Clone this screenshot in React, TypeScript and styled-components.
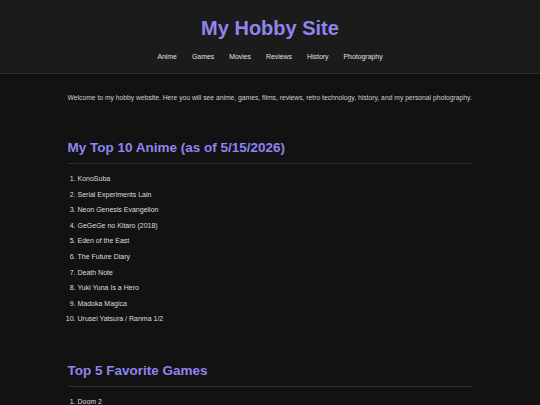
import React from "react";
import styled, { createGlobalStyle } from "styled-components";

const Global = createGlobalStyle`
  html, body { margin: 0; padding: 0; background: #121212; }
  body { font-family: "Liberation Sans", Arial, sans-serif; color: #dcdcdc; }
`;

const Header = styled.header`
  background: #1b1b1b;
  border-bottom: 1px solid #2c2c2c;
  padding: 17px 0 12px;
  text-align: center;
`;

const Title = styled.h1`
  margin: 0;
  font-size: 20px;
  line-height: 23px;
  font-weight: 700;
  color: #8f85ee;
`;

const Nav = styled.nav`
  display: flex;
  justify-content: center;
  gap: 15px;
  margin-top: 13px;
`;

const NavLink = styled.a`
  font-size: 6.9px;
  line-height: 8px;
  color: #e0e0e0;
  text-decoration: none;
`;

const Main = styled.main`
  width: 75%;
  margin: 0 auto;
  padding: 19px 0 20px;
`;

const Intro = styled.p`
  margin: 0;
  font-size: 6.75px;
  line-height: 9px;
  color: #cfcfcf;
  white-space: nowrap;
`;

const Section = styled.section<{ $gap: number }>`
  margin-top: ${(p) => p.$gap}px;
`;

const Heading = styled.h2`
  margin: 0;
  font-size: 13.5px;
  line-height: 16px;
  font-weight: 700;
  color: #8f85ee;
  padding-bottom: 7px;
  border-bottom: 1px solid #2f2f2f;
`;

const List = styled.ol`
  margin: 7px 0 0;
  padding-left: 10px;
`;

const Item = styled.li`
  font-size: 7px;
  line-height: 15.6px;
  color: #dedede;
`;

const anime = [
  "KonoSuba",
  "Serial Experiments Lain",
  "Neon Genesis Evangelion",
  "GeGeGe no Kitaro (2018)",
  "Eden of the East",
  "The Future Diary",
  "Death Note",
  "Yuki Yuna Is a Hero",
  "Madoka Magica",
  "Urusei Yatsura / Ranma 1/2",
];

const games = ["Doom 2", "Half-Life", "Chrono Trigger", "Tetris", "Super Metroid"];

const navItems = ["Anime", "Games", "Movies", "Reviews", "History", "Photography"];

export default function App() {
  return (
    <>
      <Global />
      <Header>
        <Title>My Hobby Site</Title>
        <Nav>
          {navItems.map((n) => (
            <NavLink key={n} href="#">
              {n}
            </NavLink>
          ))}
        </Nav>
      </Header>
      <Main>
        <Intro>
          Welcome to my hobby website. Here you will see anime, games, films, reviews, retro technology, history, and my
          personal photography.
        </Intro>
        <Section $gap={38}>
          <Heading>My Top 10 Anime (as of 5/15/2026)</Heading>
          <List>
            {anime.map((a) => (
              <Item key={a}>{a}</Item>
            ))}
          </List>
        </Section>
        <Section $gap={36}>
          <Heading>Top 5 Favorite Games</Heading>
          <List>
            {games.map((g) => (
              <Item key={g}>{g}</Item>
            ))}
          </List>
        </Section>
      </Main>
    </>
  );
}
